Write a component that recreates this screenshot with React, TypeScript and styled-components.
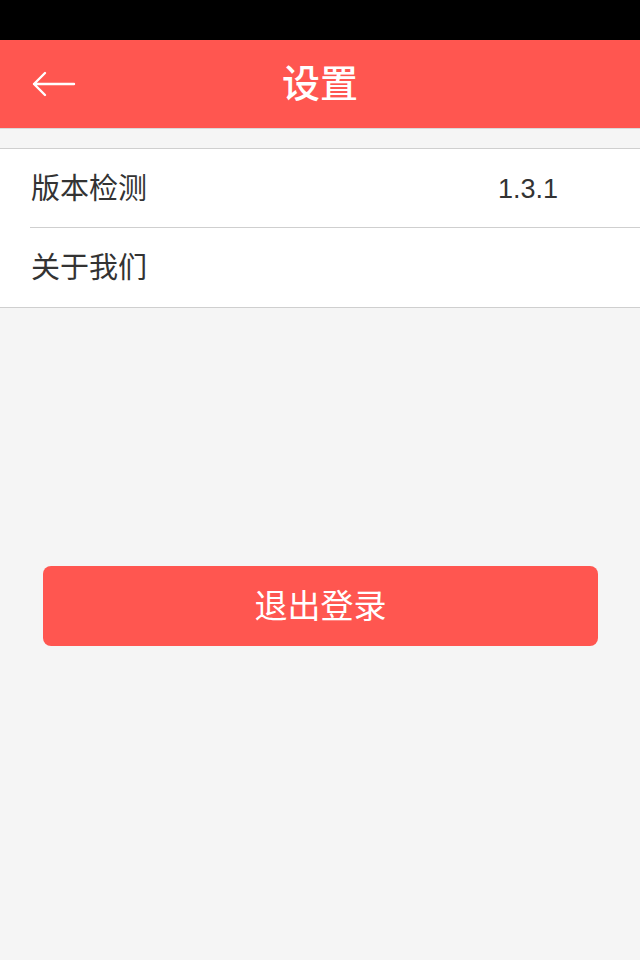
import React from "react";
import styled, { createGlobalStyle } from "styled-components";

const Global = createGlobalStyle`
  html, body { margin: 0; padding: 0; background: #f5f5f5; }
  body { font-family: "Noto Sans CJK SC", "Liberation Sans", sans-serif; }
  * { box-sizing: border-box; }
`;

const Page = styled.div`
  width: 640px;
  min-height: 960px;
  background: #f5f5f5;
  display: flex;
  flex-direction: column;
`;

const StatusBar = styled.div`
  height: 40px;
  background: #000;
`;

const Header = styled.header`
  height: 89px;
  background: #ff5650;
  border-bottom: 1px solid #d9d9d9;
  display: grid;
  grid-template-columns: 100px 1fr 100px;
  align-items: center;
`;

const BackButton = styled.button`
  border: none;
  background: transparent;
  padding: 0 0 0 32px;
  height: 100%;
  display: flex;
  align-items: center;
  cursor: pointer;
`;

const Title = styled.h1`
  margin: 0;
  text-align: center;
  color: #fff;
  font-size: 38px;
  font-weight: 500;
  line-height: 1;
  padding-bottom: 6px;
`;

const List = styled.section`
  margin-top: 19px;
  background: #fff;
  border-top: 1px solid #cfcfcf;
  border-bottom: 1px solid #cfcfcf;
`;

const Row = styled.div<{ $last?: boolean }>`
  height: 79px;
  margin-left: 30px;
  padding-left: 1px;
  display: flex;
  align-items: center;
  justify-content: space-between;
  border-bottom: ${(p) => (p.$last ? "none" : "1px solid #cfcfcf")};
`;

const Label = styled.span`
  font-size: 29px;
  color: #333;
  line-height: 1;
  padding-bottom: 4px;
`;

const Value = styled.span`
  font-family: "Liberation Sans", Arial, sans-serif;
  font-size: 27px;
  color: #333;
  margin-right: 82px;
  padding-top: 2px;
`;

const ButtonWrap = styled.div`
  padding: 258px 42px 0 43px;
`;

const LogoutButton = styled.button`
  width: 100%;
  height: 80px;
  border: none;
  border-radius: 8px;
  background: #ff5650;
  color: #fff;
  font-family: "Noto Sans CJK SC", sans-serif;
  font-size: 33px;
  line-height: 1;
  padding-bottom: 4px;
  cursor: pointer;
`;

export default function App() {
  return (
    <>
      <Global />
      <Page>
        <StatusBar />
        <Header>
          <BackButton aria-label="返回">
            <svg width="44" height="26" viewBox="0 0 44 26" fill="none">
              <path d="M13 2 L2 13 L13 24 M2 13 H42" stroke="#fff" strokeWidth="2.4" strokeLinecap="round" strokeLinejoin="round" />
            </svg>
          </BackButton>
          <Title>设置</Title>
          <div />
        </Header>
        <List>
          <Row>
            <Label>版本检测</Label>
            <Value>1.3.1</Value>
          </Row>
          <Row $last>
            <Label>关于我们</Label>
          </Row>
        </List>
        <ButtonWrap>
          <LogoutButton>退出登录</LogoutButton>
        </ButtonWrap>
      </Page>
    </>
  );
}
